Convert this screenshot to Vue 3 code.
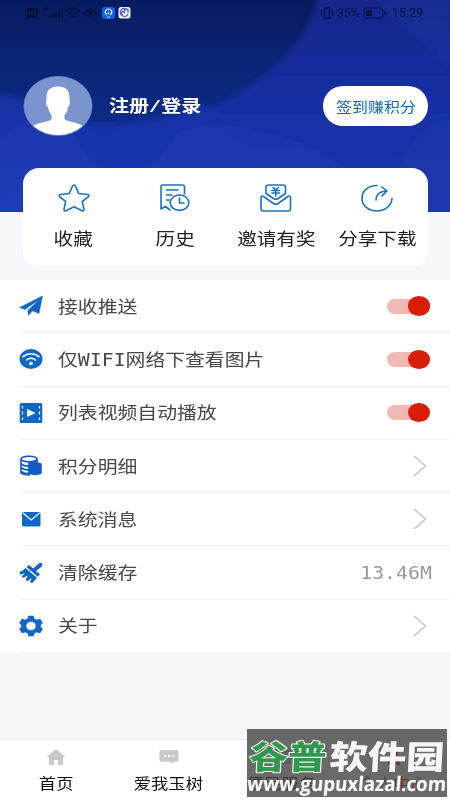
<script setup>
const actions = [
  { id: 'star', label: '收藏' },
  { id: 'history', label: '历史' },
  { id: 'invite', label: '邀请有奖' },
  { id: 'share', label: '分享下载' },
]
const rows = [
  { id: 'push', label: '接收推送', kind: 'switch' },
  { id: 'wifi', label: '仅WIFI网络下查看图片', kind: 'switch' },
  { id: 'video', label: '列表视频自动播放', kind: 'switch' },
  { id: 'points', label: '积分明细', kind: 'link' },
  { id: 'mail', label: '系统消息', kind: 'link' },
  { id: 'clean', label: '清除缓存', kind: 'value', value: '13.46M' },
  { id: 'about', label: '关于', kind: 'link' },
]
const tabs = [
  { id: 'home', label: '首页' },
  { id: 'chat', label: '爱我玉树' },
  { id: 'service', label: '便民服务' },
  { id: 'me', label: '个人中心', active: true },
]
</script>

<template>
  <div class="page">
    <header class="hero">
      <svg class="hero-bg" viewBox="0 0 450 212" preserveAspectRatio="none">
        <defs>
          <linearGradient id="sky" x1="0" y1="0" x2="0" y2="1">
            <stop offset="0" stop-color="#071c5e" />
            <stop offset=".3" stop-color="#0b2577" />
            <stop offset=".6" stop-color="#0c2c88" />
            <stop offset="1" stop-color="#14379c" />
          </linearGradient>
          <linearGradient id="hill" x1="0" y1="0" x2="0" y2="1">
            <stop offset="0" stop-color="#12268a" />
            <stop offset=".5" stop-color="#172fa4" />
            <stop offset="1" stop-color="#1a39b5" />
          </linearGradient>
          <linearGradient id="low" x1="0" y1="0" x2="0" y2="1">
            <stop offset="0" stop-color="#1731a3" />
            <stop offset="1" stop-color="#1b3bb9" />
          </linearGradient>
          <filter id="soft" x="-5%" y="-5%" width="110%" height="110%"><feGaussianBlur stdDeviation="3" /></filter>
        </defs>
        <rect width="450" height="212" fill="url(#sky)" />
        <g filter="url(#soft)">
          <path d="M330 -10H460V222H120V124Q200 120 235 95Q270 75 290 50Q312 30 318 -10Z" fill="url(#hill)" />
          <path d="M-10 96Q18 92 34 106Q60 125 110 124Q160 122 205 105L300 222H-10Z" fill="url(#low)" />
          <path d="M0 140L40 108L75 135L120 212H0ZM225 125Q290 130 350 170L300 212H120L180 130Z" fill="#3052c4" opacity=".15" />
          <path d="M375 0H450V70L425 45ZM400 170Q410 130 450 115V212H400Z" fill="#2443a5" opacity=".22" />
        </g>
      </svg>

      <div class="status">
        <svg class="status-left" viewBox="0 0 110 16">
          <rect x="2" y="3" width="11" height="10" rx="2" fill="#061039" />
          <path d="M4 6V10M4 8H7M7 6V10M9 6V10H10L11 9V7L10 6Z" stroke="#102363" fill="none" />
          <path d="M18 3H23M18 5H22M25 13V11M28 13V9M31 13V7M34 13V5M37 13V3" stroke="#07123f" stroke-width="1.500" />
          <path d="M41 6Q48 .5 55 6M43.500 9Q48 5 52.500 9M46 11.500Q48 9.500 50 11.500" fill="none" stroke="#07123f" stroke-width="1.500" />
          <path d="M59 8Q65.500 1 72 8Q65.500 14 59 8Z" fill="none" stroke="#07123f" stroke-width="1.600" />
          <circle cx="65.500" cy="7.700" r="2.600" fill="#07123f" />
          <rect x="77" y="2" width="13" height="12" rx="3" fill="#1260e8" />
          <path d="M82 10Q79.500 8 80.500 5.800Q83.500 2.500 86.500 5.800Q87.500 8 85 10M82.500 12H85M83.500 7V9" fill="none" stroke="#d9edff" stroke-width="1.200" />
          <rect x="93.500" y="2" width="12" height="11.500" rx="2.500" fill="#eef1ff" />
          <path d="M102.500 5A4 4 0 1 0 103 9M98 9.500A1.500 1.500 0 1 1 99.500 8V4.500H103V8" fill="none" stroke="#5568cb" stroke-width="1.300" />
        </svg>
        <div class="status-right">
          <svg class="vibrate" viewBox="0 0 15 12"><path d="M4.500 1H9.500V11H4.500ZM1.500 3V9M12.800 3V9" fill="none" stroke="#07124b" stroke-width="1.300" /></svg>
          <span class="percent">35%</span>
          <svg class="battery" viewBox="0 0 24 12"><rect x="1" y="1" width="19" height="10" rx="2" fill="none" stroke="#07124b" /><rect x="3" y="3" width="6" height="6" fill="#07124b" /><path d="M22 4V8" stroke="#07124b" stroke-width="1.500" /></svg>
          <span class="time">15:29</span>
        </div>
      </div>

      <div class="account">
        <svg class="avatar" viewBox="0 0 70 60">
          <defs><clipPath id="face"><ellipse cx="35" cy="30" rx="33.500" ry="29" /></clipPath></defs>
          <ellipse cx="35" cy="30" rx="34.500" ry="30" fill="#6681c5" />
          <ellipse cx="35" cy="30" rx="33.700" ry="29.200" fill="#7b94cf" />
          <path clip-path="url(#face)" d="M35 10.500C27.500 10.500 23.500 14 23.500 21V25C22.500 25 22.800 30 25 31C25.500 35 27 37 28.500 39V43C27.500 46 14 46 9 51V60H61V51C56 46 43 46 41.500 43V39C43.500 37 44.500 35 45 31C47 30 47.500 25 46.500 25V21C46.500 14 42.500 10.500 35 10.500Z" fill="#fff" />
        </svg>
        <div class="login"><span class="wide">注册/登录</span></div>
        <button class="checkin"><span class="wide">签到赚积分</span></button>
      </div>
    </header>

    <nav class="card">
      <div v-for="a in actions" :key="a.id" class="action">
        <svg class="action-icon" viewBox="0 0 34 30">
          <path v-if="a.id === 'star'" d="M17 2Q18 2 18.700 3.500L21.700 10.500L30.500 11.500Q33 12 31.200 13.800L25.300 18.500L27 26.500Q27 28.500 25 27.700L17 23.800L9 27.700Q7 28.500 7 26.500L8.700 18.500L2.800 13.800Q1 12 3.500 11.500L12.300 10.500L15.300 3.500Q16 2 17 2Z" />
          <template v-else-if="a.id === 'history'">
            <path d="M26.500 11V4Q26.500 2 24 2H4.500Q3 2 3 4V26L7.500 23.500L12 27M8.500 7H20M8.500 12H14M8.500 17H11" />
            <ellipse cx="21.500" cy="19.700" rx="9.300" ry="7.700" /><path d="M21.500 15V20H26" />
          </template>
          <template v-else-if="a.id === 'invite'">
            <path d="M7 11V4Q7 2 9.500 2H24Q26.500 2 26.500 4V11M7 10.500L14.500 15.500Q16.800 17 19 15.500L26.500 10.500" />
            <path d="M2 15Q2 12 4.500 13.500L14.500 20.500Q16.800 22 19 20.500L29 13.500Q31.500 12 31.500 15V26Q31.500 28 29 28H4.500Q2 28 2 26Z" />
            <path d="M14 4.500L16.700 7L19.500 4.500M13 7.500H20.500M13 10H20.500M16.700 7V13" />
          </template>
          <template v-else>
            <path d="M17 2.500C8 2.500 2 8 2 15.500C2 22.500 8.500 28 17 28C25 28 31.500 22.500 32 15.500" />
            <path d="M16 17Q16 8.500 26.500 8M22 4L27 8L22 13" />
          </template>
        </svg>
        <span class="action-label wide">{{ a.label }}</span>
      </div>
    </nav>

    <main class="list">
      <div v-for="r in rows" :key="r.id" class="row">
        <svg class="row-icon" viewBox="0 0 24 22">
          <path v-if="r.id === 'push'" d="M.5 12.500L23.500 1L20 18.500L13.500 15.800L9.500 20.500L8.800 15.500L20 4.500L6 14.500Z" stroke="#1067c6" stroke-width=".5" />
          <template v-else-if="r.id === 'wifi'">
            <ellipse cx="12" cy="11" rx="11.500" ry="10" />
            <path class="cut" d="M3.500 9Q12 2.500 20.500 9M7 12.500Q12 8 17 12.500" /><ellipse cx="12" cy="15.500" rx="1.900" ry="1.700" fill="#fff" />
          </template>
          <template v-else-if="r.id === 'video'">
            <rect x=".7" y="1" width="22.600" height="20" rx="1.500" />
            <path class="cut thin" d="M3.500 4V6.500M3.500 9.500V12.500M3.500 15.500V18M20.500 4V6.500M20.500 9.500V12.500M20.500 15.500V18" />
            <path d="M8 7L16.500 11L8 15Z" fill="#fff" />
          </template>
          <template v-else-if="r.id === 'points'">
            <path d="M2 4.500V18Q3 20 10 20V8Q17 7 18 4.500V8" fill="#fff" stroke="#1459c6" stroke-width="1.600" />
            <path d="M2 8.800Q5 11.500 11 11M2 12.800Q5 15.200 11 14.800M2 16.500Q5 19 11 18.500" fill="none" stroke="#1459c6" stroke-width="1.800" />
            <ellipse cx="10" cy="4" rx="8" ry="2.800" fill="#fff" stroke="#1459c6" stroke-width="1.600" />
            <path d="M9.500 8.500Q16 5.500 22.800 8.500V18.500Q16 22 9.500 18.500Z" fill="#1459c6" />
          </template>
          <template v-else-if="r.id === 'mail'">
            <rect x="3" y="4" width="18.500" height="14.500" rx="1.700" />
            <path class="cut thin" d="M4 5L12.200 12L20.500 5" />
          </template>
          <template v-else-if="r.id === 'clean'">
            <path d="M10 3L14.200 6.500L20 1.200Q22 0 23.300 1.800Q24 3.500 22.500 4.700L17 9L21 12.500L18.800 14.800L7.500 5Z" />
            <path d="M6.500 6L18 15.800L13 21.200L10.800 19.500L12.500 17L11.500 16.500L8.800 19.200L6.500 17.500L8.500 14.800L7.500 14L4.500 16L2.500 14.300L5.500 12L4.800 11.500L1.500 12.800L.3 10Q4 9 6.500 6Z" />
          </template>
          <path v-else fill-rule="evenodd" d="M9 3.500L9.500 1H14.500L15 3.500L17.500 5L21 4L23.500 8L21.500 10V12L23.500 14L21 18L17.500 17L15 18.500L14.500 21H9.500L9 18.500L6.500 17L3 18L.5 14L2.500 12V10L.5 8L3 4L6.500 5ZM12 6.500A5 4.500 0 1 0 12 15.500A5 4.500 0 1 0 12 6.500Z" stroke="#1067c6" stroke-width=".6" stroke-linejoin="round" />
        </svg>
        <div class="row-body">
          <span class="row-label wide">{{ r.label }}</span>
          <span v-if="r.kind === 'switch'" class="track"><span class="thumb"></span></span>
          <svg v-else-if="r.kind === 'link'" class="chevron" viewBox="0 0 14 22"><path d="M1 1L12.500 11L1 21" /></svg>
          <span v-else class="value wide">{{ r.value }}</span>
        </div>
      </div>
    </main>

    <footer class="tabs">
      <div v-for="t in tabs" :key="t.id" class="tab" :class="{ active: t.active }">
        <svg class="tab-icon" viewBox="0 0 20 18">
          <path v-if="t.id === 'home'" d="M10 1L19.500 9H17V17H12V12H8V17H3V9H.5Z" />
          <template v-else-if="t.id === 'chat'">
            <path d="M2.500 2H17.500Q19.500 2 19.500 4V12Q19.500 13.800 17.500 13.800H14.500V16L12 13.800H2.500Q.5 13.800 .5 12V4Q.5 2 2.500 2Z" />
            <path d="M5 7H7V9H5ZM9 7H11V9H9ZM13 7H15V9H13Z" fill="#fff" />
          </template>
          <path v-else-if="t.id === 'service'" d="M1 2H9V8H1ZM11 2H19V8H11ZM1 10H9V16H1ZM11 10H19V16H11Z" />
          <path v-else d="M10 1A4 4 0 0 1 10 9A4 4 0 0 1 10 1ZM4 17V14Q4 10 10 10Q16 10 16 14V17Z" />
        </svg>
        <span class="tab-label wide">{{ t.label }}</span>
      </div>
    </footer>

    <div class="watermark">
      <svg viewBox="0 0 200 68">
        <g class="brand" transform="skewX(-3)">
          <text x="4" y="40" textLength="77" lengthAdjust="spacingAndGlyphs" class="green">谷普</text>
          <text x="84" y="40" textLength="115" lengthAdjust="spacingAndGlyphs" class="white">软件园</text>
        </g>
        <text x="5" y="62.500" textLength="199" lengthAdjust="spacingAndGlyphs" class="url" transform="skewX(-5)">www.gupuxlazal.com</text>
      </svg>
    </div>
  </div>
</template>

<style>
body { margin: 0; background: #f7f6fa; }
</style>

<style scoped>
.page { position: relative; display: flex; flex-direction: column; width: 450px; height: 800px; overflow: hidden; background: #f7f6fa; font-family: "Noto Sans CJK SC", sans-serif; }
.wide { display: inline-block; white-space: nowrap; transform: scaleX(1.14); }
.hero { position: relative; flex: none; height: 212px; overflow: hidden; }
.hero-bg { position: absolute; inset: 0; width: 100%; height: 100%; }
.status { position: relative; display: flex; justify-content: space-between; height: 26px; padding: 5px 26px 0 25px; box-sizing: border-box; }
.status-left { width: 110px; height: 16px; }
.status-right { display: flex; align-items: center; height: 16px; color: #07124b; font: 12px/16px Roboto, sans-serif; }
.vibrate { width: 15px; height: 12px; margin-right: 2px; }
.percent { width: 26px; }
.battery { width: 24px; height: 12px; }
.time { width: 32px; margin-left: 5px; letter-spacing: .3px; }
.account { position: relative; display: flex; align-items: center; height: 60px; padding: 0 22px 0 23px; margin-top: 50px; }
.avatar { width: 70px; height: 60px; }
.login { flex: 1; margin-left: 16px; padding-top: 4px; color: #fff; font: 700 17px/24px "Liberation Mono", "Noto Sans CJK SC", monospace; }
.login .wide { transform: scaleX(1.18); transform-origin: left; }
.checkin { display: flex; justify-content: center; align-items: center; width: 105px; height: 40px; padding: 0 0 1px; border: 0; border-radius: 20px; background: #fff; color: #1465b0; font: 14px/20px "Noto Sans CJK SC", sans-serif; }
.card { position: relative; display: flex; flex: none; width: 405px; height: 97px; margin: -44px 0 15px 23px; border-radius: 16px 16px 13px 13px; background: #fff; }
.action { display: flex; flex: 1; flex-direction: column; align-items: center; padding-top: 15px; }
.action-icon { width: 34px; height: 30px; fill: none; stroke: #1c72c6; stroke-width: 1.6; stroke-linejoin: round; stroke-linecap: round; }
.action-label { margin-top: 13px; color: #222; font-size: 17.2px; line-height: 24px; }
.list { flex: none; height: 373px; background: #fff; }
.row { display: flex; align-items: center; height: 53.3px; padding-left: 19px; background: linear-gradient(#f1f0f2, #f1f0f2) 19px 100% / 431px 1px no-repeat; }
.row-icon { flex: none; width: 24px; height: 22px; margin-top: -1px; fill: #1067c6; }
.cut { fill: none; stroke: #fff; stroke-width: 1.6; }
.thin { stroke-width: 1.2; }
.row-body { display: flex; flex: 1; align-items: center; justify-content: space-between; margin: -1px 0 0 15px; padding-right: 20px; }
.row-label { padding-top: 1px; color: #484848; font: 17.4px/24px "DejaVu Sans Mono", "Noto Sans CJK SC", monospace; transform-origin: left; }
.track { display: flex; justify-content: flex-end; align-items: center; width: 43px; height: 15px; border-radius: 8px; background: #f1b9b4; }
.thumb { width: 22px; height: 19.5px; border-radius: 50%; background: #d81e06; }
.chevron { width: 14px; height: 22px; margin-right: 3px; fill: none; stroke: #c5c5ca; stroke-width: 1.5; }
.value { padding-top: 1px; margin-right: -2px; color: #999; font: 17.4px/24px "DejaVu Sans Mono", monospace; transform-origin: right; }
.tabs { display: flex; flex: none; height: 60px; margin-top: auto; background: #fff; box-shadow: 0 -1px 1px #efecef; }
.tab { display: flex; flex: 1; flex-direction: column; align-items: center; padding-top: 8px; color: #111; }
.tab-icon { width: 20px; height: 18px; fill: #c9c9c9; }
.tab-label { margin-top: 5px; font: 15.2px/22px "Noto Sans CJK SC", sans-serif; }
.active { color: #d81e06; }
.active .tab-icon { fill: #d81e06; }
.watermark { position: absolute; left: 247px; top: 729px; width: 200px; height: 68px; background: rgba(68, 68, 68, .8); }
.watermark svg { display: block; width: 200px; height: 68px; overflow: visible; }
.brand { font: 900 33px "Noto Sans CJK SC", sans-serif; paint-order: stroke; stroke-linejoin: round; opacity: .95; }
.green { fill: #2f9b4b; stroke: #fff; stroke-width: 2px; }
.white { fill: #fff; }
.url { font: 700 20px "Open Sans", sans-serif; fill: #fff; }
</style>
